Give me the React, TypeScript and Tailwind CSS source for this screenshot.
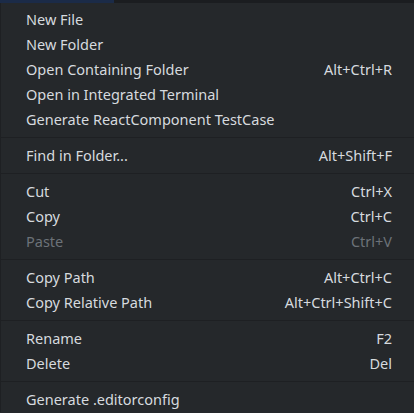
const groups = [
  [
    { label: 'New File' },
    { label: 'New Folder' },
    { label: 'Open Containing Folder', keys: 'Alt+Ctrl+R' },
    { label: 'Open in Integrated Terminal' },
    { label: 'Generate ReactComponent TestCase' },
  ],
  [{ label: 'Find in Folder...', keys: 'Alt+Shift+F' }],
  [
    { label: 'Cut', keys: 'Ctrl+X' },
    { label: 'Copy', keys: 'Ctrl+C' },
    { label: 'Paste', keys: 'Ctrl+V', disabled: true },
  ],
  [
    { label: 'Copy Path', keys: 'Alt+Ctrl+C' },
    { label: 'Copy Relative Path', keys: 'Alt+Ctrl+Shift+C' },
  ],
  [
    { label: 'Rename', keys: 'F2' },
    { label: 'Delete', keys: 'Del' },
  ],
  [{ label: 'Generate .editorconfig' }],
]

export default function App() {
  return (
    <div
      className="w-[414px] h-[413px] overflow-hidden bg-[#25282b] text-[14.5px] text-[#d6dadf]"
      style={{ fontFamily: '"Noto Sans", "Open Sans", sans-serif' }}
    >
      <div className="flex h-[3px]">
        <div className="w-[114px] bg-[#1b2b48]" />
        <div className="flex-1 bg-[#1b1d20]" />
      </div>
      <div className="border-l border-[#1e2023] pt-[4px]">
        {groups.map((group, gi) => (
          <div key={gi}>
            {gi > 0 && <div className="my-[5px] h-px bg-[#1e2023]" />}
            {group.map((item) => (
              <div
                key={item.label}
                className={`flex h-[25px] items-center justify-between pl-[25px] pr-[22px] ${
                  item.disabled ? 'text-[#6c7278]' : ''
                }`}
              >
                <span>{item.label}</span>
                {item.keys && <span>{item.keys}</span>}
              </div>
            ))}
          </div>
        ))}
      </div>
    </div>
  )
}
